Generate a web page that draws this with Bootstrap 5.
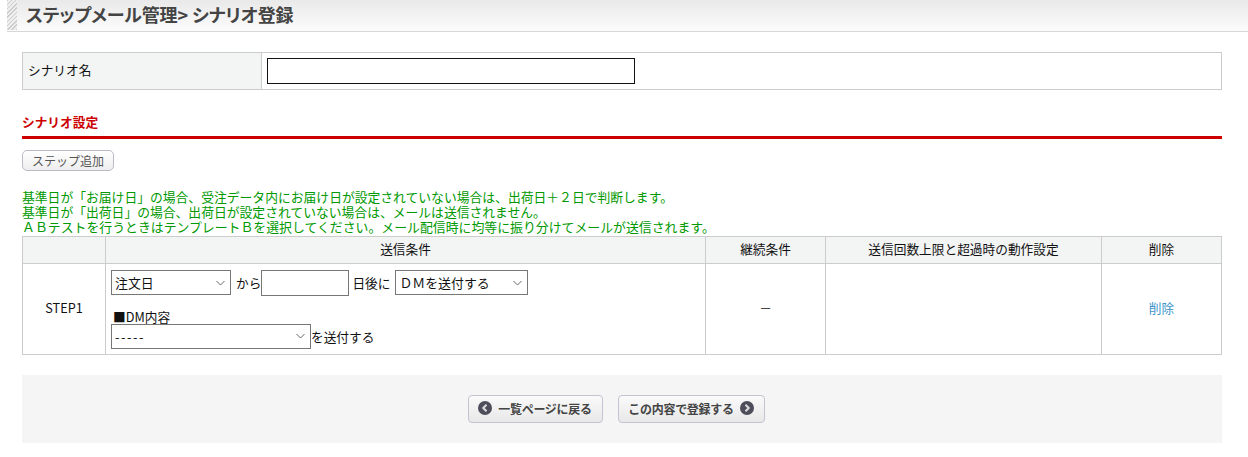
<!DOCTYPE html>
<html lang="ja">
<head>
<meta charset="utf-8">
<title>シナリオ登録</title>
<link href="https://cdn.jsdelivr.net/npm/bootstrap@5.3.0/dist/css/bootstrap.min.css" rel="stylesheet">
<style>
body{font-family:"Noto Sans CJK JP","Noto Sans",sans-serif;font-size:12.7px;color:#111;background:#fff;line-height:15px;overflow:hidden}
.pg-head{height:32px;margin-left:7px;border-bottom:1px solid #d8d8d8;background:linear-gradient(#e9e9e9,#fcfcfc);padding-left:10px}
.pg-head h1{height:31px;margin:0;padding-left:9px;font-size:18px;line-height:28px;font-weight:700;color:#444;font-feature-settings:"palt";letter-spacing:-.1px}
.pg-stripe{position:absolute;left:7px;top:0;width:10px;height:30px;background:repeating-linear-gradient(135deg,#ccc 0 1px,#eee 1px 3px)}
.pg-body{padding:20px 26px 0 22px}
.name-tbl,.step-tbl{width:1200px;border-collapse:collapse;table-layout:fixed}
.name-tbl td,.name-tbl th,.step-tbl td,.step-tbl th{border:1px solid #ccc;font-weight:400}
.name-tbl th{width:239px;height:37px;padding:0 5px 3px;background:#f3f4f4}
.name-tbl td{padding:0 5px}
.name-in{display:block;width:368px;height:26px;border:1px solid #111;background:#fff}
.sec-title{margin:24px 0 0;height:22px;font-size:12.7px;line-height:15px;font-weight:700;color:#c00;border-bottom:3px solid #c00;box-sizing:content-box}
.add-btn{display:block;margin-top:11px;width:92px;height:21px;padding:0;border:1px solid #bbbbc6;border-radius:5px;background:linear-gradient(#fff,#eee);font-size:12px;line-height:17px;color:#555}
.note{margin:18px 0 0;color:#090;font-size:12.8px;line-height:15px;white-space:nowrap}
.note-wide{font-size:12.88px}
.step-tbl{margin-top:2px}
.step-tbl th{height:27px;background:#f3f4f4;text-align:center;padding:0 0 3px}
.step-tbl td{height:91px;text-align:center;padding:0 0 3px}
.step-tbl td.cond{text-align:left;padding:5px}
.sel{height:25px;border:1px solid #777;border-radius:0;font-size:12.9px;line-height:23px;padding:0 3px;color:#111;font-family:inherit;appearance:none;background:#fff url("data:image/svg+xml,%3Csvg xmlns='http://www.w3.org/2000/svg' width='9' height='6'%3E%3Cpath d='M.5 1 4.500 5 8.500 1' fill='none' stroke='%23666'/%3E%3C/svg%3E") no-repeat right 5px center}
.s1{width:120px}.s2{width:133px}.s3{width:200px;letter-spacing:1.5px}
.days{width:88px;height:26px;border:1px solid #777;padding:0}
.cond-row{display:flex;align-items:center;height:26px}
.m5{margin-left:5px}.m3{margin-left:3px}
.dm-lab{margin-top:13px;line-height:15px;padding-left:2px}
.del-link{color:#3c94c9;text-decoration:none}
.foot-box{margin-top:20px;height:68px;width:1200px;background:#f5f5f5;gap:15px;padding-right:12px}
.act-btn{display:flex;align-items:center;justify-content:center;gap:6px;height:28px;padding:0 0 2px;border:1px solid #c3c3d3;border-radius:4px;background:linear-gradient(#fafafa,#e8e8e8);font-size:12px;font-weight:700;color:#444;letter-spacing:-.3px}
.b1{width:135px}.b2{width:147px}
.act-btn svg{flex:none}
</style>
</head>
<body>
<div class="pg-stripe"></div>
<header class="pg-head"><h1>ステップメール管理&gt; シナリオ登録</h1></header>
<main class="pg-body">
  <table class="name-tbl"><tr><th>シナリオ名</th><td><input class="name-in" type="text" aria-label="シナリオ名"></td></tr></table>
  <h2 class="sec-title">シナリオ設定</h2>
  <button type="button" class="add-btn">ステップ追加</button>
  <p class="note">基準日が「お届け日」の場合、受注データ内にお届け日が設定されていない場合は、出荷日＋２日で判断します。<br>基準日が「出荷日」の場合、出荷日が設定されていない場合は、メールは送信されません。<br><span class="note-wide">ＡＢテストを行うときはテンプレートＢを選択してください。メール配信時に均等に振り分けてメールが送信されます。</span></p>
  <table class="step-tbl">
    <colgroup><col style="width:83px"><col style="width:600px"><col style="width:120px"><col style="width:276px"><col style="width:120px"></colgroup>
    <tr><th></th><th>送信条件</th><th>継続条件</th><th>送信回数上限と超過時の動作設定</th><th>削除</th></tr>
    <tr>
      <td>STEP1</td>
      <td class="cond">
        <div class="cond-row"><select class="sel s1"><option>注文日</option></select><span class="m5">から</span><input class="days" type="text" aria-label="日数"><span class="m3">日後に</span><select class="sel s2 m5"><option>ＤＭを送付する</option></select></div>
        <div class="dm-lab">■DM内容</div>
        <div class="d-flex align-items-center"><select class="sel s3"><option>-----</option></select><span>を送付する</span></div>
      </td>
      <td>－</td>
      <td></td>
      <td><a class="del-link" href="#">削除</a></td>
    </tr>
  </table>
  <div class="foot-box d-flex align-items-center justify-content-center">
    <button type="button" class="act-btn b1"><svg width="14" height="14" viewBox="0 0 14 14"><circle cx="7" cy="7" r="7" fill="#4d4d5c"/><path d="M8.500 3.800 5.300 7l3.200 3.200" fill="none" stroke="#ddd" stroke-width="2"/></svg>一覧ページに戻る</button>
    <button type="button" class="act-btn b2">この内容で登録する<svg width="14" height="14" viewBox="0 0 14 14"><circle cx="7" cy="7" r="7" fill="#4d4d5c"/><path d="M5.500 3.800 8.700 7l-3.200 3.200" fill="none" stroke="#ddd" stroke-width="2"/></svg></button>
  </div>
</main>
<script src="https://cdn.jsdelivr.net/npm/bootstrap@5.3.0/dist/js/bootstrap.bundle.min.js"></script>
</body>
</html>
